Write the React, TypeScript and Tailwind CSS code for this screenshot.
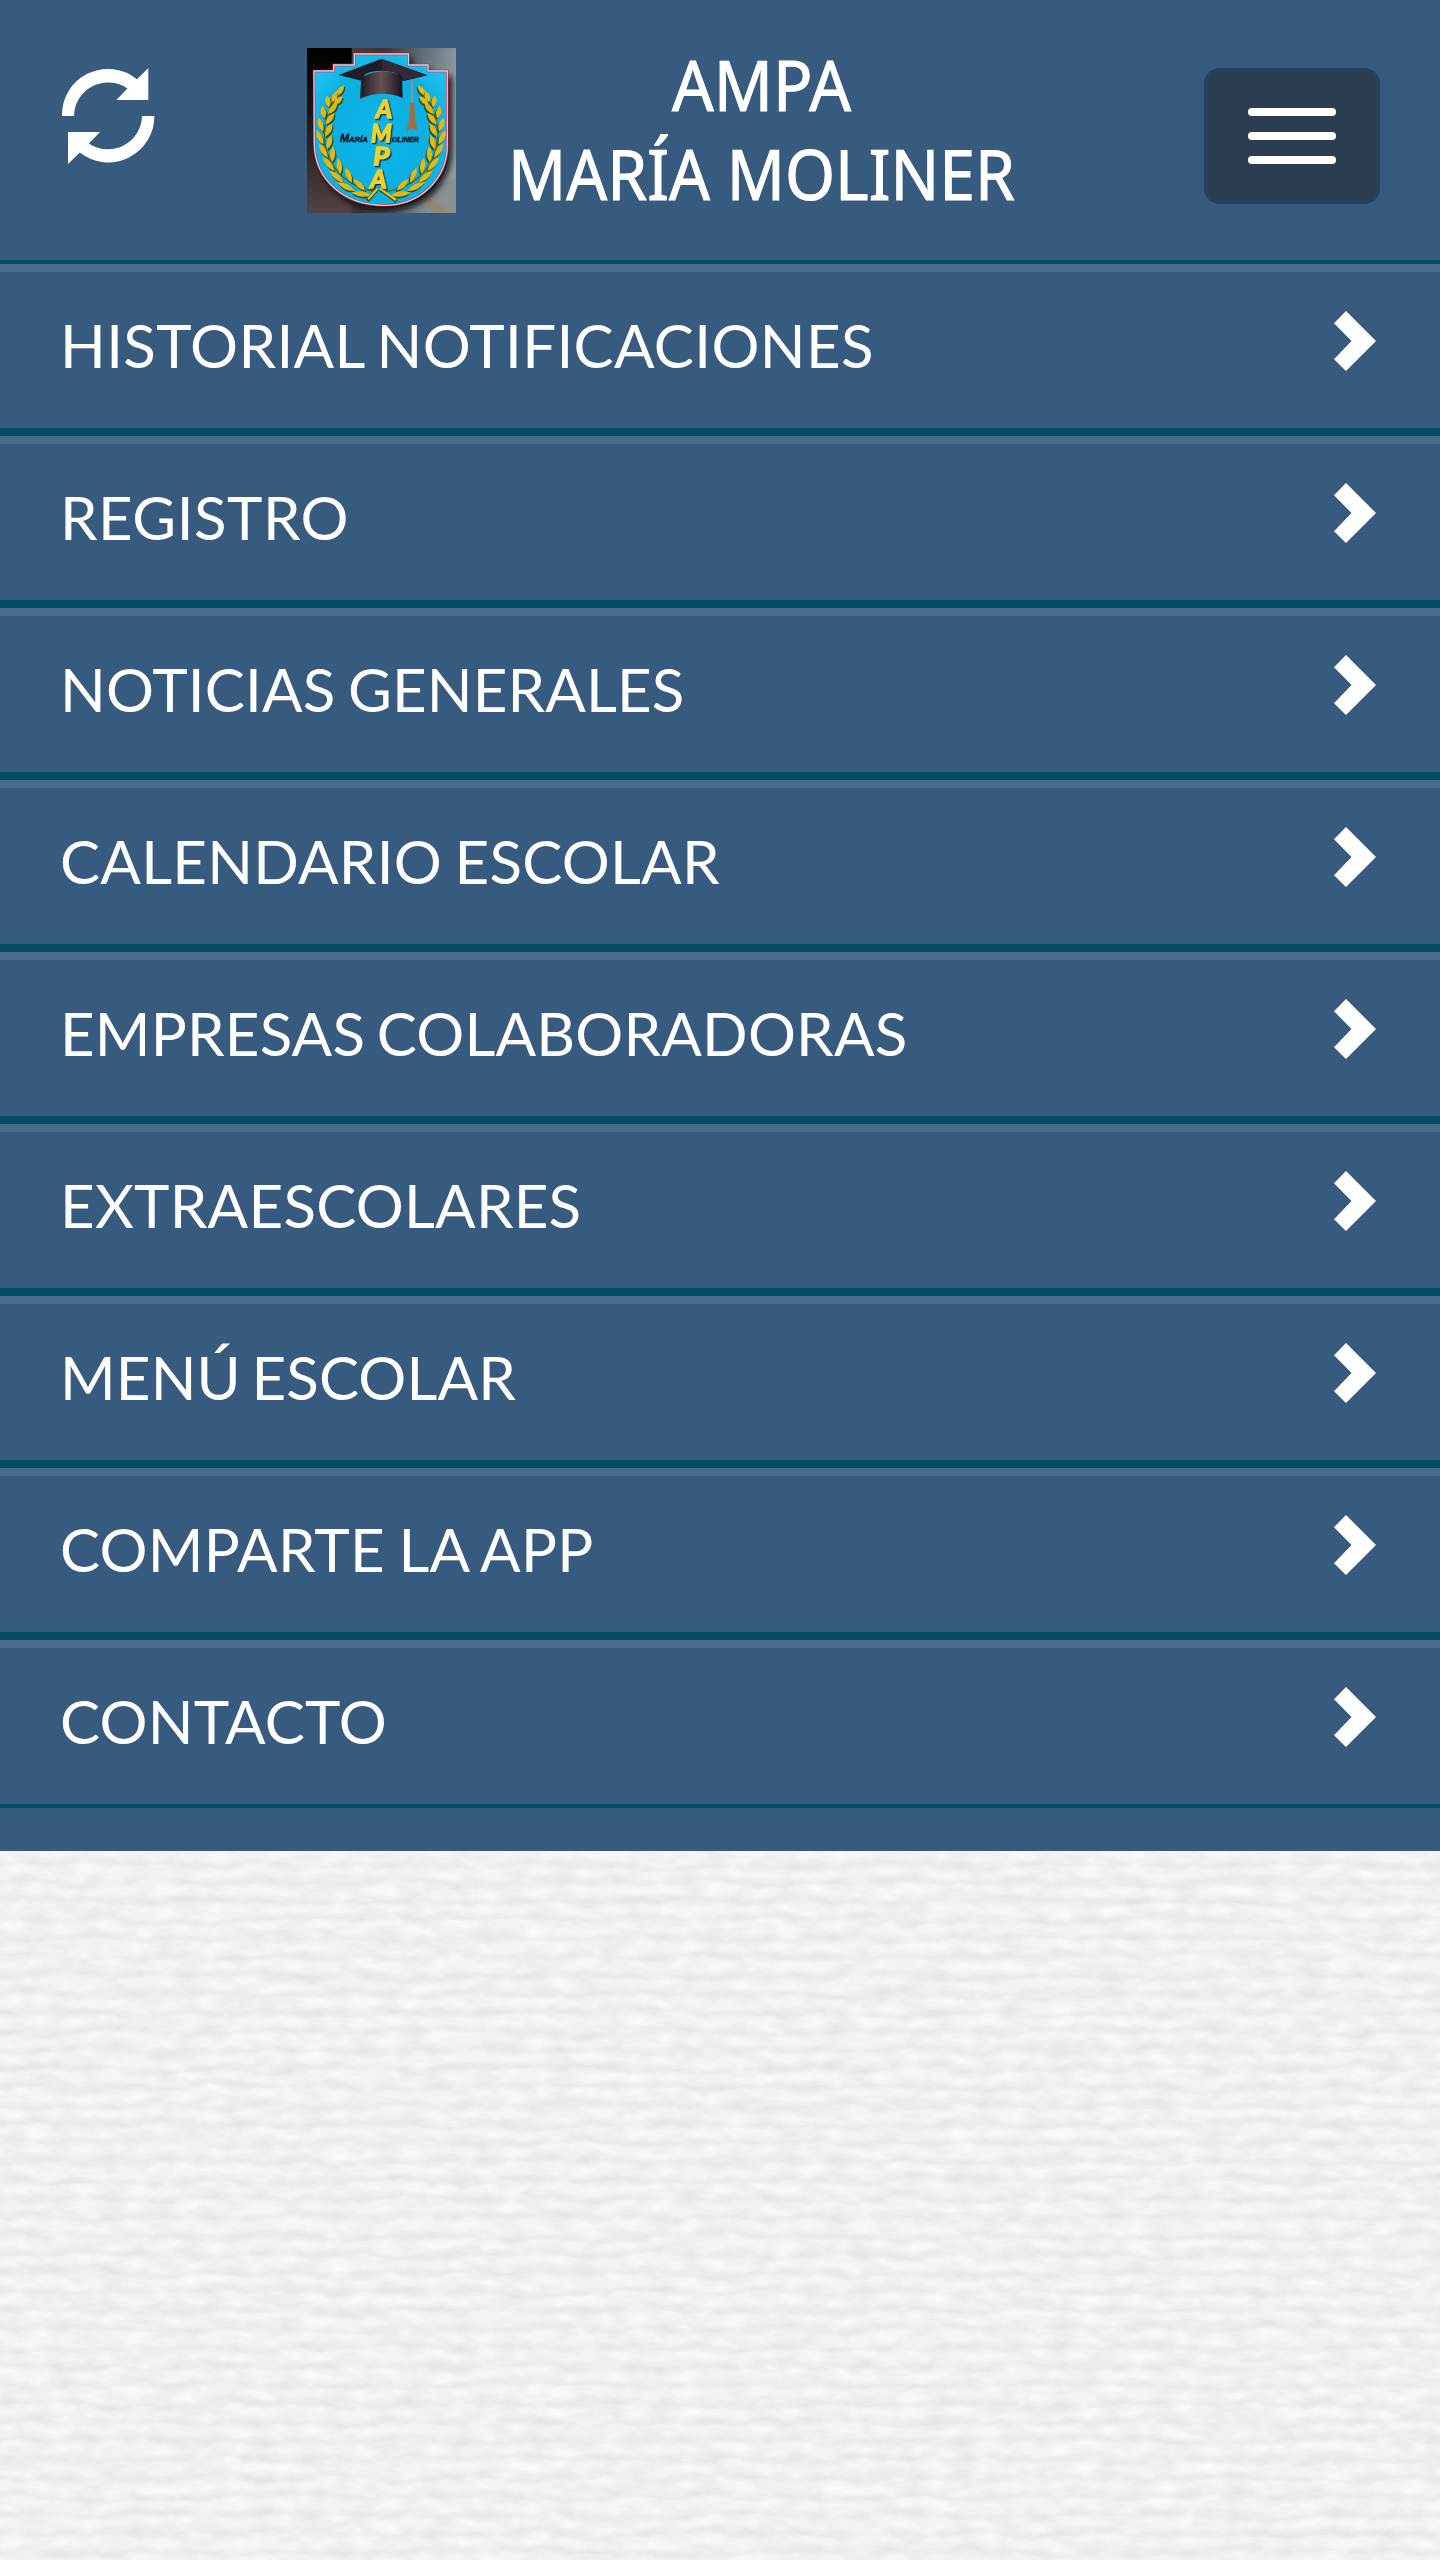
import React from "react";

const items: [string, string][] = [
  ["HISTORIAL NOTIFICACIONES", "tracking-[0.35px] [word-spacing:-3px]"],
  ["REGISTRO", "tracking-[0.5px]"],
  ["NOTICIAS GENERALES", "tracking-[0.15px] [word-spacing:-3px]"],
  ["CALENDARIO ESCOLAR", "tracking-[0.25px] [word-spacing:-3px]"],
  ["EMPRESAS COLABORADORAS", "tracking-[0.2px] [word-spacing:-4px]"],
  ["EXTRAESCOLARES", "tracking-[0.25px]"],
  ["MENÚ ESCOLAR", "tracking-[0.15px] [word-spacing:-5px]"],
  ["COMPARTE LA APP", "tracking-[0.25px] [word-spacing:-2px]"],
  ["CONTACTO", "tracking-[0.2px]"],
];

function RefreshIcon() {
  return (
    <svg className="size-[96px]" viewBox="60 68 96 96" fill="#fff" aria-hidden="true">
      <path d="M62 116A46 46 0 0 1 137 79.2L148.3 68V100H116.3L127.4 88.6A34 34 0 0 0 74 116Z" />
      <path d="M154.3 116A46 46 0 0 1 79.8 152.5L68 164V132H100L88.8 143.4A34 34 0 0 0 142 116Z" />
    </svg>
  );
}

function Chevron() {
  return (
    <svg className="h-[60px] w-[42px]" viewBox="0 0 42 60" fill="#fff" aria-hidden="true">
      <path d="M12 0L42 30L12 60L0 48.2L17.5 30L0 12.3Z" />
    </svg>
  );
}

/* Leaves of the left branch: x, y, rotation, length */
const leaves: [number, number, number, number][] = [
  [148, 182, -52, 42], [132, 200, -70, 36], [142, 212, -42, 38], [112, 214, -100, 36],
  [126, 236, -48, 42], [98, 246, -100, 40], [118, 266, -52, 44], [90, 284, -108, 44],
  [114, 300, -62, 46], [88, 322, 64, 48], [116, 336, -74, 46], [98, 362, 58, 52],
  [126, 372, -88, 48], [114, 402, 50, 56], [146, 408, -98, 50], [138, 440, 40, 58],
  [174, 436, -112, 50], [166, 470, 26, 60], [206, 464, -136, 50], [212, 492, 8, 60],
];

function Branch() {
  return (
    <g>
      <path d="M140 190Q76 300 118 390Q158 470 262 486" fill="none" stroke="#5b6110" strokeWidth="4" />
      {leaves.map(([x, y, r, l], i) => (
        <g key={i}>
          <path
            transform={`translate(${x + 3} ${y + 5}) rotate(${r})`}
            d={`M${-l / 2} 0Q0 -17 ${l / 2} 0Q0 17 ${-l / 2} 0Z`}
            fill="#1d5238"
          />
          <path
            transform={`translate(${x} ${y}) rotate(${r})`}
            d={`M${-l / 2} 0Q0 -16 ${l / 2} 0Q0 16 ${-l / 2} 0Z`}
            fill="#e6b80e"
          />
        </g>
      ))}
    </g>
  );
}

function Crest() {
  const shield = "M70 123H129V105H191V72H353V105H412V123H470V345C470 445 390 526 280 526C160 526 72 450 71 340Z";
  return (
    <svg className="h-[165px] w-[149px]" viewBox="49 54 447 495" role="img" aria-label="AMPA">
      <defs>
        <linearGradient id="back" x1="0" x2="1" y1="0" y2=".15">
          <stop offset="0" stopColor="#070606" />
          <stop offset=".28" stopColor="#4c3f3d" />
          <stop offset=".5" stopColor="#3a3233" />
          <stop offset=".75" stopColor="#5c6a72" />
          <stop offset="1" stopColor="#8b9a9e" />
        </linearGradient>
        <linearGradient id="leftShade" x1="0" x2="0" y1="0" y2="1">
          <stop offset="0" stopColor="#000" />
          <stop offset=".6" stopColor="#2c2423" />
          <stop offset="1" stopColor="#514341" />
        </linearGradient>
        <radialGradient id="sky" cx=".5" cy=".55" r=".6">
          <stop offset="0" stopColor="#12b4e8" />
          <stop offset=".7" stopColor="#0aaee0" />
          <stop offset="1" stopColor="#1fc0ee" />
        </radialGradient>
        <linearGradient id="cap" x1="0" x2="1">
          <stop offset="0" stopColor="#1b1722" />
          <stop offset=".5" stopColor="#655357" />
          <stop offset="1" stopColor="#17131c" />
        </linearGradient>
        <filter id="soft" x="-20%" y="-20%" width="140%" height="140%"><feGaussianBlur stdDeviation="9" /></filter>
        <filter id="smooth"><feGaussianBlur stdDeviation="1.3" /></filter>
        <filter id="lift" x="-20%" y="-10%" width="150%" height="120%">
          <feDropShadow dx="4" dy="4" stdDeviation="1.5" floodColor="#0a2f3b" />
        </filter>
      </defs>
      <rect x="49" y="54" width="447" height="495" fill="url(#back)" />
      <rect x="49" y="54" width="134" height="495" fill="url(#leftShade)" />
      <path d="M380 500L496 440V549H430Z" fill="#8a8c8b" opacity=".7" />
      <path d="M372 500L430 549H480L405 490Z" fill="#9c805c" opacity=".5" />
      <path d={shield} transform="translate(12 16)" fill="#0b080b" filter="url(#soft)" />
      <g filter="url(#smooth)">
        <path d={shield} fill="url(#sky)" stroke="#c3213f" strokeWidth="7" />
        <path d={shield} fill="none" stroke="#d8cbe0" strokeWidth="4" />
        <Branch />
        <g transform="translate(542 0) scale(-1 1)"><Branch /></g>
        <path d="M260 478L230 512M268 478L318 514" stroke="#29551c" strokeWidth="11" />
        <path d="M260 476L232 508M268 476L316 510" stroke="#e8c21c" strokeWidth="7" />
        <path d="M212 142L208 206Q275 178 336 204L334 138Q275 108 212 142Z" fill="url(#cap)" />
        <path d="M143 135L273 86L411 136L336 154Q330 122 273 122Q216 122 212 152Z" fill="#211a27" />
        <path d="M273 88L409 136L340 150Q330 122 273 122Z" fill="#342a34" />
        <path d="M364 152V225" stroke="#8197a0" strokeWidth="7" />
        <path d="M358 218H371L372 262L381 302L366 294L347 303L358 262Z" fill="#a16d3b" />
        <g fontFamily="'Liberation Sans', sans-serif" fontStyle="italic" fontWeight="700" fill="#091a29" stroke="#091a29" strokeWidth="1.6">
          <text x="147" y="336" fontSize="34" textLength="84" lengthAdjust="spacingAndGlyphs">M<tspan fontSize="23">ARÍA</tspan></text>
          <text x="303" y="335" fontSize="23" textLength="82" lengthAdjust="spacingAndGlyphs">OLINER</text>
        </g>
        <g
          fontFamily="Lato, sans-serif"
          fontStyle="italic"
          fontWeight="700"
          fontSize="76"
          fill="#ecd22a"
          stroke="#ecd22a"
          strokeWidth="4"
          filter="url(#lift)"
        >
          <text x="255" y="264" textLength="49" lengthAdjust="spacingAndGlyphs">A</text>
          <text x="241" y="336" textLength="62" lengthAdjust="spacingAndGlyphs">M</text>
          <text x="248" y="405" textLength="49" lengthAdjust="spacingAndGlyphs">P</text>
          <text x="239" y="473" textLength="49" lengthAdjust="spacingAndGlyphs">A</text>
        </g>
      </g>
    </svg>
  );
}

function Title() {
  return (
    <svg
      className="h-[165px] w-[520px] overflow-visible"
      viewBox="505 48 520 165"
      fill="#fff"
      stroke="#fff"
      strokeWidth="1"
      fontFamily="'Noto Sans', 'Open Sans', sans-serif"
      fontSize="70"
    >
      <text x="672" y="111.3" textLength="179" lengthAdjust="spacingAndGlyphs">AMPA</text>
      <text x="508" y="200" textLength="507" lengthAdjust="spacingAndGlyphs">MARÍA MOLINER</text>
    </svg>
  );
}

function Paper() {
  return (
    <svg className="block h-full w-full" aria-hidden="true">
      <defs>
        <linearGradient id="fold" x1="0" x2="0" y1="0" y2="1">
          <stop offset="0" stopColor="#f3f3f3" />
          <stop offset=".3" stopColor="#f3f3f3" />
          <stop offset=".7" stopColor="#ebebeb" />
          <stop offset="1" stopColor="#f3f3f3" />
        </linearGradient>
        <pattern id="folds" width="1600" height="18.6" patternUnits="userSpaceOnUse">
          <rect width="1600" height="18.6" fill="url(#fold)" />
        </pattern>
        <filter id="paper" x="0" y="0" width="100%" height="100%" colorInterpolationFilters="sRGB">
          <feTurbulence type="fractalNoise" baseFrequency="0.016 0.035" numOctaves="3" seed="8" result="wave" />
          <feDisplacementMap in="SourceGraphic" in2="wave" scale="17" xChannelSelector="R" yChannelSelector="G" result="ridges" />
          <feTurbulence type="fractalNoise" baseFrequency="0.04 0.09" numOctaves="3" seed="3" />
          <feColorMatrix values="0.08 0 0 0 0.46  0.08 0 0 0 0.46  0.08 0 0 0 0.46  0 0 0 0 1" result="grain" />
          <feComposite in="ridges" in2="grain" operator="arithmetic" k2="1" k3="1" k4="-0.5" />
        </filter>
      </defs>
      <rect x="-40" y="-40" width="1540" height="800" fill="url(#folds)" filter="url(#paper)" />
    </svg>
  );
}

export default function App() {
  return (
    <div className="flex h-[2560px] w-[1440px] flex-col overflow-hidden bg-[#f0f0f0] font-[Lato,sans-serif] text-white">
      <nav className="h-[1851px] shrink-0 bg-[#375a7f]">
        <header className="flex h-[264px] items-start border-b-4 border-[#004c64] pl-[60px]">
          <button className="mt-[68px] size-[96px]" aria-label="Actualizar"><RefreshIcon /></button>
          <div className="mt-12 ml-[151px] flex gap-[49px]">
            <Crest />
            <Title />
          </div>
          <button
            className="mt-[68px] ml-[179px] flex h-[136px] w-[176px] flex-col items-center gap-4 rounded-2xl border-4 border-[#28415b] bg-[#2b3e50] pt-9"
            aria-label="Menú"
          >
            <span className="h-2 w-[88px] rounded-full bg-white" />
            <span className="h-2 w-[88px] rounded-full bg-white" />
            <span className="h-2 w-[88px] rounded-full bg-white" />
          </button>
        </header>
        <ul>
          {items.map(([label, spacing]) => (
            <li
              key={label}
              className="flex h-[172px] items-start justify-between border-t-8 border-b-8 border-t-[#4b6b8c] border-b-[#004c64] pr-16 pl-[60px] last:h-[168px] last:border-b-4"
            >
              <span className={`mt-[37px] text-[60px] leading-[72px] whitespace-nowrap ${spacing}`}>{label}</span>
              <span className="mt-[38.6px]"><Chevron /></span>
            </li>
          ))}
        </ul>
      </nav>
      <main className="min-h-0 flex-1"><Paper /></main>
    </div>
  );
}
